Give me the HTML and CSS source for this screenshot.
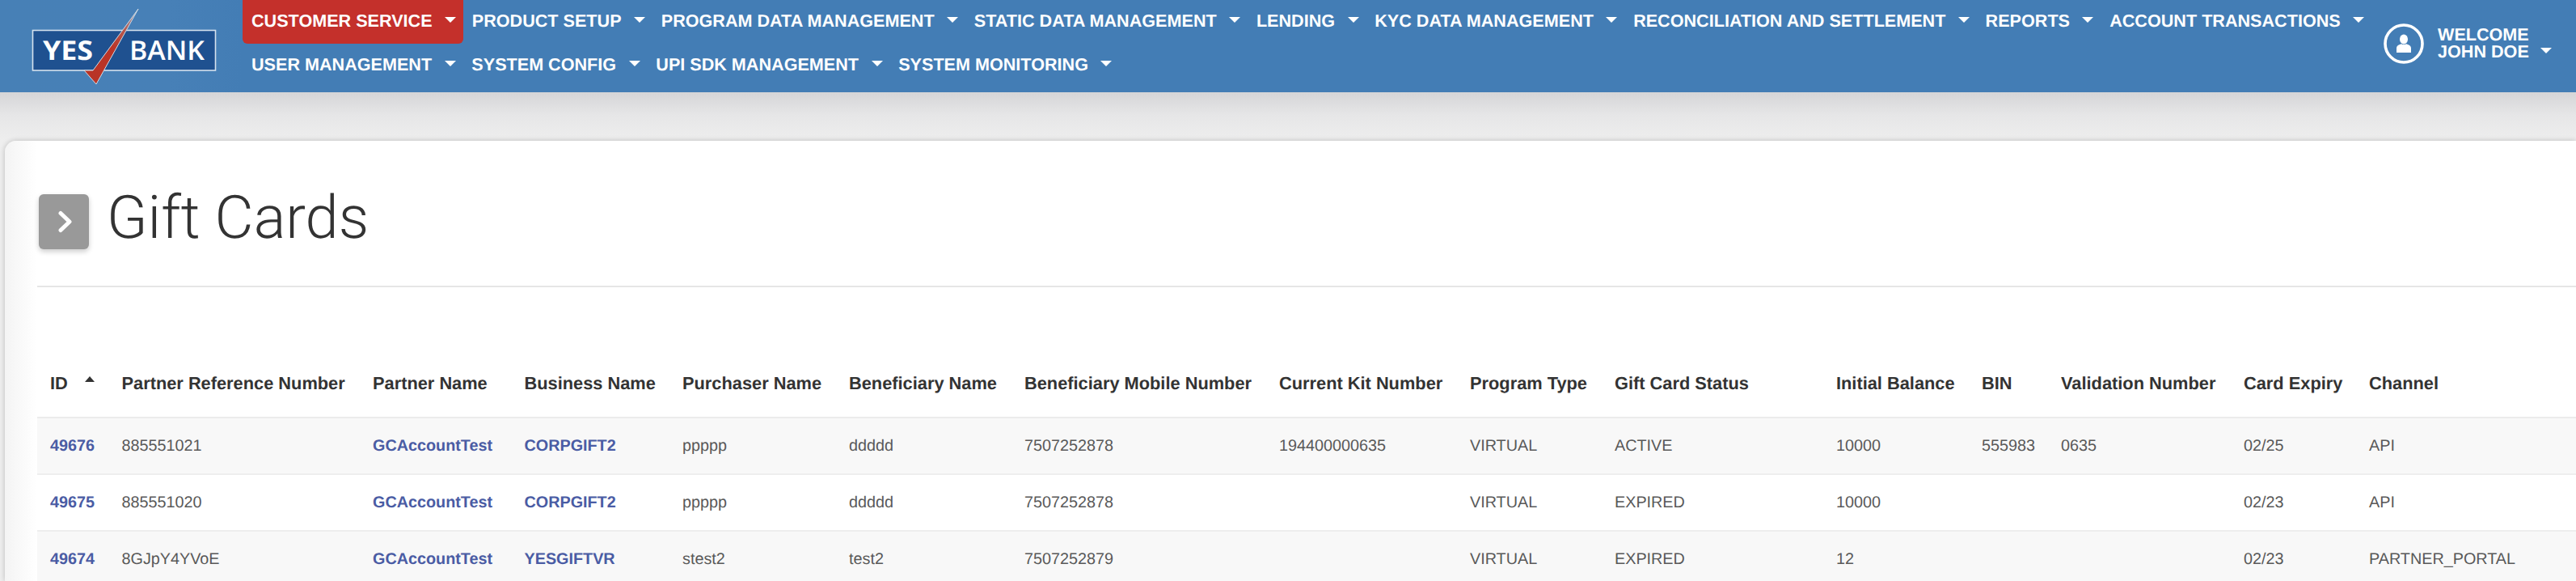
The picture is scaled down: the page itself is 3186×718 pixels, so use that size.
FILE: index.html
```html
<!DOCTYPE html>
<html lang="en">
<head>
<meta charset="utf-8">
<title>Gift Cards</title>
<link rel="stylesheet" href="styles.css">
</head>
<body>
<header class="topbar">
  <a class="logo" href="#" aria-label="Yes Bank">
    <svg width="300" height="114" viewBox="0 0 300 114">
      <defs>
        <linearGradient id="tick" x1="171" y1="11" x2="119" y2="103" gradientUnits="userSpaceOnUse">
          <stop offset="0" stop-color="#8fa6bd"/>
          <stop offset="0.3" stop-color="#b9574c"/>
          <stop offset="0.55" stop-color="#bb3427"/>
          <stop offset="1" stop-color="#b83426"/>
        </linearGradient>
      </defs>
      <rect x="40.5" y="37.5" width="226" height="49.5" fill="#1f5190" stroke="#d5e2ee" stroke-width="1.6"/>
      <text class="logo-yes" x="53" y="74" textLength="62" lengthAdjust="spacingAndGlyphs">YES</text>
      <text class="logo-bank" x="160" y="74" textLength="93" lengthAdjust="spacingAndGlyphs">BANK</text>
      <polygon points="104,87 115,87 171,11 119,104" fill="url(#tick)" stroke="#cfdbe6" stroke-width="1" stroke-linejoin="round"/>
    </svg>
  </a>
  <nav class="nav">
    <a class="nav-item is-active" href="#">CUSTOMER SERVICE<span class="caret"></span></a>
    <a class="nav-item" href="#">PRODUCT SETUP<span class="caret"></span></a>
    <a class="nav-item" href="#">PROGRAM DATA MANAGEMENT<span class="caret"></span></a>
    <a class="nav-item" href="#">STATIC DATA MANAGEMENT<span class="caret"></span></a>
    <a class="nav-item" href="#">LENDING<span class="caret"></span></a>
    <a class="nav-item" href="#">KYC DATA MANAGEMENT<span class="caret"></span></a>
    <a class="nav-item" href="#">RECONCILIATION AND SETTLEMENT<span class="caret"></span></a>
    <a class="nav-item" href="#">REPORTS<span class="caret"></span></a>
    <a class="nav-item" href="#">ACCOUNT TRANSACTIONS<span class="caret"></span></a>
    <a class="nav-item" href="#">USER MANAGEMENT<span class="caret"></span></a>
    <a class="nav-item" href="#">SYSTEM CONFIG<span class="caret"></span></a>
    <a class="nav-item" href="#">UPI SDK MANAGEMENT<span class="caret"></span></a>
    <a class="nav-item" href="#">SYSTEM MONITORING<span class="caret"></span></a>
  </nav>
  <div class="user">
    <svg class="avatar" width="50" height="50" viewBox="0 0 50 50" aria-hidden="true">
      <circle cx="25" cy="25" r="23" fill="none" stroke="#fff" stroke-width="3.6"/>
      <ellipse cx="25" cy="19.5" rx="5" ry="6" fill="#fff"/>
      <path d="M16 36v-5.500c0-2.500 1.500-3.500 4-4.500l2-.8c1.800 1.200 4.200 1.200 6 0l2 .8c2.500 1 4 2 4 4.500V36z" fill="#fff"/>
    </svg>
    <div class="user-name">WELCOME<br>JOHN DOE<span class="caret"></span></div>
  </div>
</header>
<main class="stage">
  <section class="card">
    <div class="title-row">
      <button class="toggle" type="button" aria-label="Expand">
        <svg class="chevron" width="20" height="28" viewBox="0 0 20 28"><path d="M4 3.500l11 10.500L4 24.500" fill="none" stroke="#fff" stroke-width="5" stroke-linecap="round" stroke-linejoin="round"/></svg>
      </button>
      <h1 class="title">Gift Cards</h1>
    </div>
    <table class="grid">
      <colgroup>
        <col class="c-id"><col class="c-ref"><col class="c-partner"><col class="c-business"><col class="c-purchaser"><col class="c-benef"><col class="c-mobile"><col class="c-kit"><col class="c-type"><col class="c-status"><col class="c-balance"><col class="c-bin"><col class="c-valid"><col class="c-expiry"><col class="c-channel">
      </colgroup>
      <thead>
        <tr>
          <th>ID<span class="sort"></span></th><th>Partner Reference Number</th><th>Partner Name</th><th>Business Name</th><th>Purchaser Name</th><th>Beneficiary Name</th><th>Beneficiary Mobile Number</th><th>Current Kit Number</th><th>Program Type</th><th>Gift Card Status</th><th>Initial Balance</th><th>BIN</th><th>Validation Number</th><th>Card Expiry</th><th>Channel</th>
        </tr>
      </thead>
      <tbody>
        <tr>
          <td><a href="#">49676</a></td><td>885551021</td><td><a href="#">GCAccountTest</a></td><td><a href="#">CORPGIFT2</a></td><td>ppppp</td><td>ddddd</td><td>7507252878</td><td>194400000635</td><td>VIRTUAL</td><td>ACTIVE</td><td>10000</td><td>555983</td><td>0635</td><td>02/25</td><td>API</td>
        </tr>
        <tr>
          <td><a href="#">49675</a></td><td>885551020</td><td><a href="#">GCAccountTest</a></td><td><a href="#">CORPGIFT2</a></td><td>ppppp</td><td>ddddd</td><td>7507252878</td><td></td><td>VIRTUAL</td><td>EXPIRED</td><td>10000</td><td></td><td></td><td>02/23</td><td>API</td>
        </tr>
        <tr>
          <td><a href="#">49674</a></td><td>8GJpY4YVoE</td><td><a href="#">GCAccountTest</a></td><td><a href="#">YESGIFTVR</a></td><td>stest2</td><td>test2</td><td>7507252879</td><td></td><td>VIRTUAL</td><td>EXPIRED</td><td>12</td><td></td><td></td><td>02/23</td><td>PARTNER_PORTAL</td>
        </tr>
      </tbody>
    </table>
  </section>
</main>
</body>
</html>
```
FILE: styles.css
```css
* { box-sizing: border-box; }
html, body { margin: 0; height: 718px; overflow: hidden; }
body {
  font-family: "Liberation Sans", Arial, sans-serif;
  text-rendering: geometricPrecision;
  background: #eeeeee;
  color: #333;
}
a { text-decoration: none; color: inherit; }

.topbar {
  display: flex;
  height: 114px;
  background: #437db5;
  color: #fff;
  position: relative;
  z-index: 1;
}
.logo { flex: 0 0 300px; display: block; height: 114px; background: linear-gradient(90deg, #4780b6, #4780b7 70%, #437db5); }
.logo svg { display: block; }
.logo-yes { font-family: "Open Sans", sans-serif; font-weight: 700; font-size: 33px; fill: #fff; }
.logo-bank { font-family: "Open Sans", sans-serif; font-weight: 600; font-size: 33px; fill: #fff; }

.nav {
  flex: 1 1 auto;
  display: flex;
  flex-wrap: wrap;
  align-content: flex-start;
}
.nav-item {
  display: flex;
  align-items: center;
  height: 54px;
  padding: 0 8.7px 2px 11px;
  font-size: 21.6px;
  font-weight: 700;
  white-space: nowrap;
  border-radius: 0 0 6px 6px;
}
.nav-item.is-active { background: #c4302b; }

.caret {
  display: inline-block;
  width: 0;
  height: 0;
  margin-left: 15.5px;
  margin-top: -4px;
  border-left: 7px solid transparent;
  border-right: 7px solid transparent;
  border-top: 7px solid #fff;
}

.user {
  flex: 0 0 238px;
  display: flex;
  align-items: flex-start;
  padding-top: 29px;
}
.avatar { flex: none; }
.user-name {
  margin-left: 17px;
  padding-top: 3px;
  font-size: 21.6px;
  font-weight: 700;
  line-height: 21px;
  white-space: nowrap;
}
.user-name .caret { vertical-align: 5px; margin-top: 0; margin-left: 14px; }

.stage {
  height: 604px;
  padding: 60px 0 0 6px;
  background: linear-gradient(180deg, #d5d5d7 0, #e6e6e7 28px, #eeeeee 60px);
  overflow: hidden;
}
.card {
  height: 544px;
  overflow: hidden;
  padding: 0 0 0 40px;
  border-radius: 14px 0 0 0;
  background: linear-gradient(90deg, #f4f4f4 0, #ffffff 40px);
  box-shadow: 0 0 6px rgba(0, 0, 0, 0.22);
}
.title-row {
  display: flex;
  align-items: flex-start;
  height: 181px;
  padding: 66px 0 0 2px;
  border-bottom: 2px solid #e6e6e6;
}
.toggle {
  flex: none;
  display: flex;
  align-items: center;
  justify-content: center;
  width: 62px;
  height: 68px;
  padding: 0 0 0 3px;
  border: 0;
  border-radius: 6px;
  background: #999;
  box-shadow: 0 3px 6px rgba(0, 0, 0, 0.2);
}
.title {
  margin: -12px 0 0 22px;
  font-family: Roboto, "Liberation Sans", sans-serif;
  font-size: 74px;
  line-height: 84px;
  font-weight: 300;
  color: #333;
}

.grid {
  width: 3140px;
  table-layout: fixed;
  border-collapse: collapse;
}
.c-id { width: 88.5px; }
.c-ref { width: 310.5px; }
.c-partner { width: 187.5px; }
.c-business { width: 195.5px; }
.c-purchaser { width: 206px; }
.c-benef { width: 217px; }
.c-mobile { width: 315px; }
.c-kit { width: 236px; }
.c-type { width: 179px; }
.c-status { width: 274px; }
.c-balance { width: 180px; }
.c-bin { width: 98px; }
.c-valid { width: 226px; }
.c-expiry { width: 155px; }

.grid th, .grid td {
  padding: 0 0 0 16px;
  text-align: left;
  white-space: nowrap;
}
.grid thead tr { height: 161px; }
.grid th {
  padding-top: 78px;
  font-size: 21.8px;
  font-weight: 700;
  color: #333;
  border-bottom: 2px solid #ececec;
}
.grid tbody tr { height: 70px; border-bottom: 2px solid #eeeeee; }
.grid tbody tr:nth-child(odd) { background: #f8f8f8; }
.grid td { font-size: 19.8px; color: #595959; }
.grid td a { font-weight: 700; color: #4a5ca4; }

.sort {
  display: inline-block;
  width: 0;
  height: 0;
  margin-left: 21px;
  vertical-align: 9px;
  border-left: 6.5px solid transparent;
  border-right: 6.5px solid transparent;
  border-bottom: 7px solid #333;
}
```
